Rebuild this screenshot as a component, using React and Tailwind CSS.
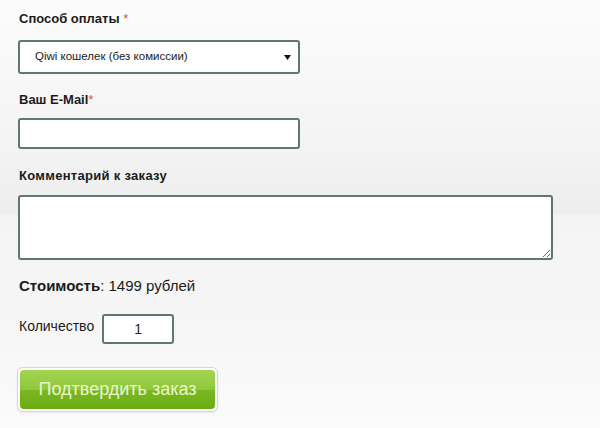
import React from "react";

export default function App() {
  return (
    <div className="min-h-[428px] w-[600px] bg-[linear-gradient(to_bottom,#fcfcfc_0px,#f3f3f3_150px,#ededed_213px,#f4f4f4_216px,#f6f6f6_330px,#fbfbfb_428px)] pl-[18px] pt-[11px] font-['Liberation_Sans',Arial,sans-serif] text-[#1b1b1b]">
      <div className="flex flex-col">
        <div className="h-[16px] pl-[1px] text-[13px] font-bold leading-[16px]">
          Способ оплаты <span className="font-normal text-[#d9534f]">*</span>
        </div>
        <div className="mt-[13px] flex h-[34px] w-[282px] items-center justify-between rounded-[3px] border-2 border-[#5e7775] bg-white pl-[15px] pr-[7px]">
          <span className="text-[11.5px] text-[#222]">Qiwi кошелек (без комиссии)</span>
          <svg width="7" height="5" viewBox="0 0 7 5" className="mt-[1px]">
            <path d="M0 0 L7 0 L3.5 5 Z" fill="#111" />
          </svg>
        </div>
        <div className="mt-[18px] h-[16px] pl-[1px] text-[13px] font-bold leading-[16px]">
          Ваш E-Mail<span className="font-normal text-[#d9534f]">*</span>
        </div>
        <input
          type="text"
          className="mt-[10px] h-[31px] w-[282px] rounded-[3px] border-2 border-[#5e7775] bg-white outline-none"
        />
        <div className="mt-[19px] h-[16px] pl-[1px] text-[13px] font-bold leading-[16px] tracking-[0.3px]">
          Комментарий к заказу
        </div>
        <textarea className="mt-[11px] h-[65px] w-[535px] rounded-[3px] border-2 border-[#5e7775] bg-white outline-none" />
        <div className="mt-[17px] h-[18px] pl-[1px] text-[15px] leading-[18px]">
          <span className="font-bold">Стоимость</span>: 1499 рублей
        </div>
        <div className="mt-[19px] flex h-[30px] items-center">
          <span className="mb-[6px] pl-[1px] text-[14px] leading-[16px]">Количество</span>
          <div className="ml-[8px] flex h-[30px] w-[72px] items-center justify-center rounded-[3px] border-2 border-[#5e7775] bg-white text-[14px]">
            1
          </div>
        </div>
        <div className="mt-[23px] ml-[-1px] w-[201px] rounded-[6px] border border-[#d6d6d6] bg-white p-[2px] shadow-[0_1px_2px_rgba(0,0,0,0.08)]">
          <button className="flex h-[39px] w-full items-center justify-center rounded-[4px] bg-[linear-gradient(to_bottom,#a2d452_0%,#8fc83c_50%,#7bb823_52%,#6aab12_100%)] text-[18px] text-[#e9f6cc]">
            Подтвердить заказ
          </button>
        </div>
      </div>
    </div>
  );
}
